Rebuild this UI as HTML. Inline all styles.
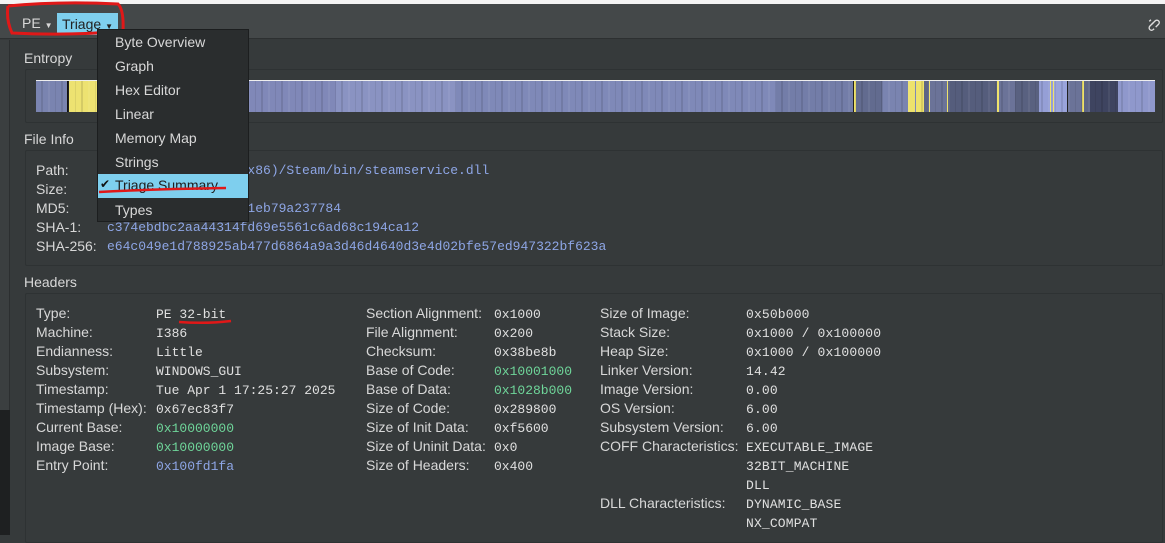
<!DOCTYPE html>
<html><head><style>
*{margin:0;padding:0;box-sizing:border-box}
body{width:1165px;height:535px;overflow:hidden;background:#363a3b;font-family:"Liberation Sans",sans-serif;font-size:14px;color:#d8d8d8;position:relative}
.abs{position:absolute}
.m{font-family:"Liberation Mono",monospace;font-size:13px;color:#e0e0e0}
.g{color:#6fd69a}.b{color:#8ea6e6}
.box{position:absolute;border:1px solid #2e3233;border-radius:2px}
.lbl{position:absolute;font-size:14px}
.row{position:absolute;white-space:nowrap}
</style></head><body>
<div class="abs" style="left:0;top:0;width:1165px;height:4px;background:#f4f4f4"></div>
<div class="abs" style="left:0;top:4px;width:1165px;height:35px;background:#444849;border-bottom:1px solid #2d3031"></div>
<div class="abs" style="left:0;top:40px;width:10px;height:495px;background:#3b3f40;border-right:1px solid #2c2f30"></div>
<div class="abs" style="left:0;top:410px;width:10px;height:125px;background:#1e2021"></div>
<div class="abs" style="left:22px;top:15px;font-size:14px">PE <span style="font-size:8px">▼</span></div>
<div class="abs" style="left:57px;top:13px;width:61px;height:22px;background:#7ecfee;color:#222;padding:3px 0 0 5px">Triage <span style="font-size:8px">▼</span></div>
<svg class="abs" style="left:1144px;top:15px" width="17" height="17" viewBox="0 0 16 16"><g fill="none" stroke="#ddd" stroke-width="1.3"><path d="M7 9 L10.5 5.5 A2.2 2.2 0 0 1 13.7 8.7 L11 11.4"/><path d="M9 7 L5.5 10.5 A2.2 2.2 0 0 0 8.7 13.7 L9.5 12.9"/><path d="M6.5 4.5 L5 6"/></g></svg>
<svg class="abs" style="left:0;top:0" width="130" height="40"><path d="M8 6 Q60 1 118 4 Q124 10 123 31 Q70 36 12 33 Q6 20 8 6" fill="none" stroke="#e01818" stroke-width="3"/></svg>

<div class="lbl" style="left:24px;top:50px">Entropy</div>
<div class="box" style="left:25px;top:69px;width:1138px;height:54px"></div>
<div class="abs" style="left:36px;top:80px;width:1119px;height:32px;border-top:1px solid #eee;background:
repeating-linear-gradient(90deg,transparent 0 5px,rgba(0,0,0,.1) 5px 7px,transparent 7px 12px,rgba(255,255,255,.06) 12px 14px,transparent 14px 19px,rgba(0,0,0,.07) 19px 20px),
linear-gradient(90deg,#7a84b0 0 31px,#111 31px 33px,#ede271 33px 61px,#8088b8 61px 300px,#8a93c2 300px 420px,#7f89b8 420px 740px,#737da8 740px 817px,#222 817px 818px,#eee26c 818px 820px,#626b8f 820px 846px,#7a84b0 846px 872px,#eee26c 872px 879px,#8a93c4 879px 880px,#eee26c 880px 888px,#5d6585 888px 893px,#eee26c 893px 894px,#6b7398 894px 911px,#eee26c 911px 912px,#555d7c 912px 961px,#eee26c 961px 963px,#6b7398 963px 979px,#596180 979px 1003px,#959fd6 1003px 1014px,#eee26c 1014px 1015px,#959fd6 1015px 1017px,#eee26c 1017px 1018px,#9aa4db 1018px 1031px,#222 1031px 1032px,#6b7398 1032px 1046px,#eee26c 1046px 1048px,#5d6585 1048px 1054px,#3e4460 1054px 1082px,#8f98cc 1082px 1119px)"></div>

<div class="lbl" style="left:24px;top:131px">File Info</div>
<div class="box" style="left:25px;top:150px;width:1138px;height:116px"></div>
<div class="row" style="left:36px;top:162px">Path:</div><div class="row m b" style="left:107px;top:163px">C:/Program Files (x86)/Steam/bin/steamservice.dll</div>
<div class="row" style="left:36px;top:181px">Size:</div>
<div class="row" style="left:36px;top:200px">MD5:</div><div class="row m b" style="left:107px;top:201px">2f8b0e8f3e71cdea7c1eb79a237784</div>
<div class="row" style="left:36px;top:219px">SHA-1:</div><div class="row m b" style="left:107px;top:220px">c374ebdbc2aa44314fd69e5561c6ad68c194ca12</div>
<div class="row" style="left:36px;top:238px">SHA-256:</div><div class="row m b" style="left:107px;top:239px">e64c049e1d788925ab477d6864a9a3d46d4640d3e4d02bfe57ed947322bf623a</div>

<div class="lbl" style="left:24px;top:274px">Headers</div>
<div class="box" style="left:25px;top:293px;width:1138px;height:250px"></div>
<div style="position:absolute;left:36px;top:304px;line-height:19px">Type:<br>Machine:<br>Endianness:<br>Subsystem:<br>Timestamp:<br>Timestamp (Hex):<br>Current Base:<br>Image Base:<br>Entry Point:</div>
<div class="m" style="position:absolute;left:156px;top:305px;line-height:19px">PE 32-bit<br>I386<br>Little<br>WINDOWS_GUI<br>Tue Apr 1 17:25:27 2025<br>0x67ec83f7<br><span class="g">0x10000000</span><br><span class="g">0x10000000</span><br><span class="b">0x100fd1fa</span></div>
<svg class="abs" style="left:176px;top:317px" width="60" height="10"><path d="M3 5 Q30 7 55 4" stroke="#e01818" stroke-width="2.5" fill="none"/></svg>
<div style="position:absolute;left:366px;top:304px;line-height:19px">Section Alignment:<br>File Alignment:<br>Checksum:<br>Base of Code:<br>Base of Data:<br>Size of Code:<br>Size of Init Data:<br>Size of Uninit Data:<br>Size of Headers:</div>
<div class="m" style="position:absolute;left:494px;top:305px;line-height:19px">0x1000<br>0x200<br>0x38be8b<br><span class="g">0x10001000</span><br><span class="g">0x1028b000</span><br>0x289800<br>0xf5600<br>0x0<br>0x400</div>
<div style="position:absolute;left:600px;top:304px;line-height:19px">Size of Image:<br>Stack Size:<br>Heap Size:<br>Linker Version:<br>Image Version:<br>OS Version:<br>Subsystem Version:<br>COFF Characteristics:<br><br><br>DLL Characteristics:</div>
<div class="m" style="position:absolute;left:746px;top:305px;line-height:19px;letter-spacing:0.15px">0x50b000<br>0x1000 / 0x100000<br>0x1000 / 0x100000<br>14.42<br>0.00<br>6.00<br>6.00<br>EXECUTABLE_IMAGE<br>32BIT_MACHINE<br>DLL<br>DYNAMIC_BASE<br>NX_COMPAT</div>

<div class="abs" style="left:97px;top:29px;width:152px;height:193px;background:#2a2d2e;border:1px solid #1c1e1f"></div>
<div style="position:absolute;left:115px;top:30px;line-height:24px;font-size:14px">Byte Overview<br>Graph<br>Hex Editor<br>Linear<br>Memory Map<br>Strings</div>
<div class="abs" style="left:98px;top:174px;width:150px;height:24px;background:#7ecfee;color:#1e1e1e;padding:3px 0 0 17px">Triage Summary</div>
<div class="abs" style="left:100px;top:177px;font-size:12px;color:#111">✔</div>
<div class="abs" style="left:115px;top:202px">Types</div>
<svg class="abs" style="left:96px;top:184px" width="140" height="12"><path d="M3 8 Q60 5 130 4" stroke="#e01818" stroke-width="2.5" fill="none"/></svg>
</body></html>
